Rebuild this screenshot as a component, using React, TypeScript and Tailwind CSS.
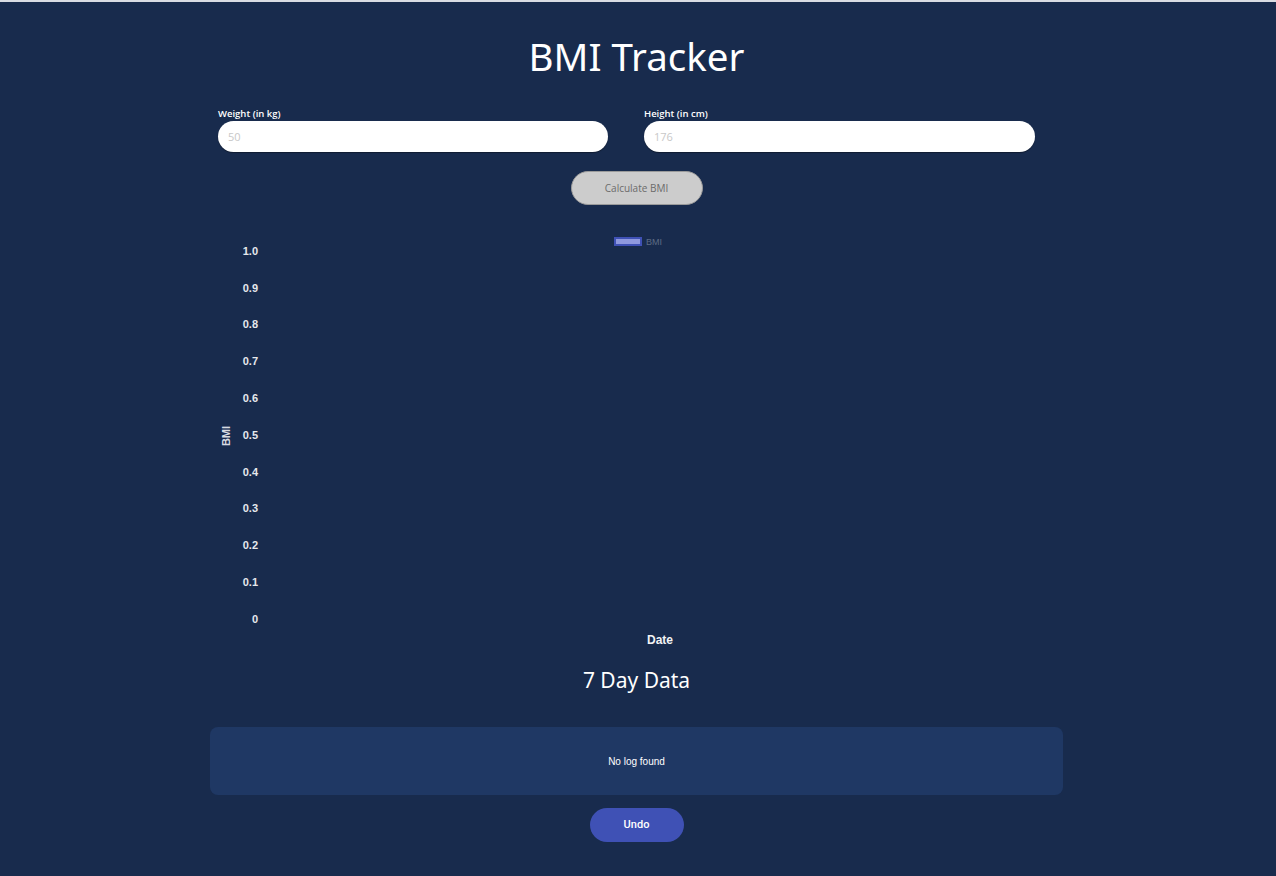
const ticks = ['1.0', '0.9', '0.8', '0.7', '0.6', '0.5', '0.4', '0.3', '0.2', '0.1', '0']

function BmiChart() {
  return (
    <svg width={853} height={422} className="block" style={{ fontFamily: '"Liberation Sans", Arial, sans-serif' }}>
      <rect x={405} y={10} width={26} height={7} fill="#8f99de" stroke="#3f51b5" strokeWidth={2} />
      <text x={436} y={17} fontSize={9} fill="#5d6b85">BMI</text>

      {ticks.map((t, i) => (
        <text
          key={t}
          x={48}
          y={23 + i * 36.8}
          dy="0.35em"
          textAnchor="end"
          fontSize={11}
          fontWeight={700}
          fill="#e6e8ec"
        >
          {t}
        </text>
      ))}

      <text
        x={16}
        y={208}
        textAnchor="middle"
        dy="0.35em"
        fontSize={11}
        fontWeight={700}
        fill="#d8dbe2"
        transform="rotate(-90 16 208)"
      >
        BMI
      </text>

      <text x={450} y={412} dy="0.35em" textAnchor="middle" fontSize={12} fontWeight={700} fill="#f2f3f5">
        Date
      </text>
    </svg>
  )
}

export default function App() {
  return (
    <div className="min-h-[876px] border-t-2 border-[#d9dce3] bg-[#182b4d] font-['Open_Sans',sans-serif] text-white">
      <div className="ml-[210px] flex w-[853px] flex-col items-center">
        <h1 className="mt-[28px] h-[52px] font-['Noto_Sans',sans-serif] text-[38.5px] leading-[52px] font-normal">
          BMI Tracker
        </h1>

        <div className="mt-[25px] flex w-full gap-[36px] pl-[8px]">
          <label className="flex w-[390px] flex-col">
            <span className="text-[9.5px] leading-[13px] font-semibold">Weight (in kg)</span>
            <input
              className="mt-[1px] h-[31px] rounded-full bg-white px-[10px] text-[11px] text-gray-700 outline-none placeholder:text-[#c8c8c8] shadow-[0_1px_1px_rgba(0,0,0,0.35)]"
              placeholder="50"
            />
          </label>
          <label className="flex w-[391px] flex-col">
            <span className="text-[9.5px] leading-[13px] font-semibold">Height (in cm)</span>
            <input
              className="mt-[1px] h-[31px] rounded-full bg-white px-[10px] text-[11px] text-gray-700 outline-none placeholder:text-[#c8c8c8] shadow-[0_1px_1px_rgba(0,0,0,0.35)]"
              placeholder="176"
            />
          </label>
        </div>

        <button className="mt-[19px] h-[34px] w-[132px] rounded-full border border-[#9a9a9a] bg-[#cccccc] text-[10px] text-[#6b6b6b]">
          Calculate BMI
        </button>

        <div className="mt-[23px] w-full">
          <BmiChart />
        </div>

        <h2 className="mt-[15px] h-[30px] font-['Noto_Sans',sans-serif] text-[21px] leading-[30px]">
          7 Day Data
        </h2>

        <div className="mt-[32px] flex h-[68px] w-full items-center justify-center rounded-[8px] bg-[#1f3864]">
          <span className="font-['Liberation_Sans',sans-serif] text-[10px]">No log found</span>
        </div>

        <button className="mt-[13px] h-[34px] w-[94px] rounded-full bg-[#3f51b5] font-['Roboto',sans-serif] text-[11px] font-medium">
          Undo
        </button>
      </div>
    </div>
  )
}
